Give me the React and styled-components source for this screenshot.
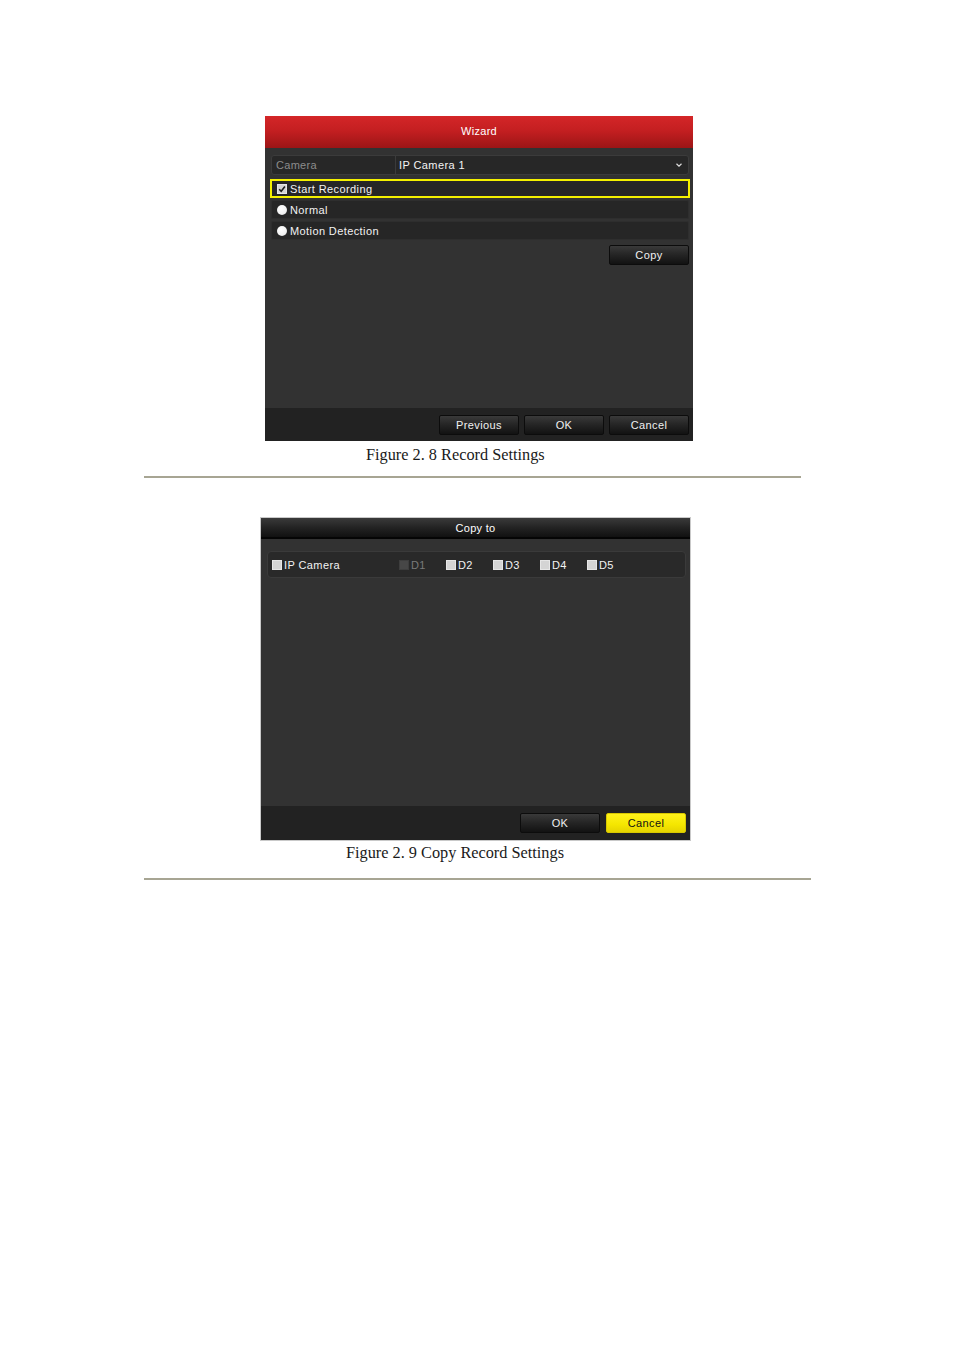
import React from "react";
import styled, { createGlobalStyle } from "styled-components";

const GlobalStyle = createGlobalStyle`
  html, body {
    margin: 0;
    padding: 0;
    background: #ffffff;
  }
  body {
    font-family: "Liberation Sans", Arial, sans-serif;
  }
`;

const Page = styled.div`
  width: 954px;
  min-height: 1348px;
  padding-top: 116px;
  box-sizing: border-box;
  display: flex;
  flex-direction: column;
  align-items: flex-start;
`;

const Dialog = styled.div`
  margin-left: ${({ left }) => left}px;
  margin-top: ${({ top }) => top || 0}px;
  width: ${({ width }) => width}px;
  height: ${({ height }) => height}px;
  background: #323232;
  display: flex;
  flex-direction: column;
  box-sizing: border-box;
  border: ${({ framed }) => (framed ? "1px solid #c9c9c9" : "none")};
  font-size: 11px;
  color: #f2f2f2;
`;

const TitleBar = styled.div`
  height: ${({ tall }) => (tall ? 32 : 21)}px;
  flex-shrink: 0;
  box-sizing: border-box;
  padding-bottom: ${({ tall }) => (tall ? 3 : 0)}px;
  display: flex;
  align-items: center;
  justify-content: center;
  color: #ffffff;
  font-size: 11px;
  letter-spacing: 0.3px;
  background: ${({ red }) =>
    red
      ? "linear-gradient(to bottom, #d42628 0%, #c41f21 45%, #9c1516 100%)"
      : "linear-gradient(to bottom, #3a3a3a 0%, #232323 50%, #111111 100%)"};
  border-bottom: ${({ red }) => (red ? "none" : "2px solid #050505")};
`;

const Body = styled.div`
  flex: 1;
  display: flex;
  flex-direction: column;
  padding: ${({ pad }) => pad};
  gap: 2px;
`;

const FieldRow = styled.div`
  height: 20px;
  box-sizing: border-box;
  display: flex;
  align-items: center;
  background: #272727;
  border: 1px solid #3b3b3b;
  border-radius: 3px;
  margin: 0 4px 0 6px;
`;

const FieldLabel = styled.div`
  width: 124px;
  height: 100%;
  display: flex;
  align-items: center;
  padding-left: 4px;
  box-sizing: border-box;
  color: #8c8c8c;
  letter-spacing: 0.3px;
  border-right: 1px solid #3b3b3b;
`;

const FieldValue = styled.div`
  flex: 1;
  display: flex;
  align-items: center;
  justify-content: space-between;
  padding: 0 6px 0 3px;
  color: #f4f4f4;
  letter-spacing: 0.4px;
`;

const OptionRow = styled.div`
  height: 19px;
  box-sizing: border-box;
  display: flex;
  align-items: center;
  gap: 3px;
  padding-left: 5px;
  background: #262626;
  border: ${({ active }) => (active ? "2px solid #f4f000" : "1px solid #2e2e2e")};
  border-radius: ${({ active }) => (active ? 0 : 2)}px;
  margin: ${({ active }) => (active ? "2px 3px 0 5px" : "0 4px 0 6px")};
  color: #f2f2f2;
  letter-spacing: 0.4px;
`;

const Radio = styled.span`
  width: 10px;
  height: 10px;
  border-radius: 50%;
  background: radial-gradient(circle at 40% 35%, #ffffff 0%, #f2f2f2 60%, #cfcfcf 100%);
  display: inline-block;
  flex-shrink: 0;
`;

const Box = styled.span`
  width: 10px;
  height: 10px;
  flex-shrink: 0;
  display: inline-flex;
  align-items: center;
  justify-content: center;
  background: ${({ disabled }) => (disabled ? "#474747" : "#d4d4d4")};
  border: 1px solid ${({ disabled }) => (disabled ? "#3e3e3e" : "#e6e6e6")};
  box-sizing: border-box;
`;

const ActionLine = styled.div`
  display: flex;
  justify-content: flex-end;
  margin-top: 3px;
  padding-right: 4px;
`;

const Button = styled.div`
  width: 80px;
  height: 20px;
  box-sizing: border-box;
  display: flex;
  align-items: center;
  justify-content: center;
  font-size: 11px;
  letter-spacing: 0.4px;
  color: ${({ primary }) => (primary ? "#111111" : "#f0f0f0")};
  background: ${({ primary }) =>
    primary
      ? "linear-gradient(to bottom, #fff21a 0%, #f4e600 60%, #e6d400 100%)"
      : "linear-gradient(to bottom, #3a3a3a 0%, #262626 45%, #121212 100%)"};
  border: 1px solid ${({ primary }) => (primary ? "#d8c800" : "#0c0c0c")};
  border-radius: 2px;
`;

const Footer = styled.div`
  height: ${({ h }) => h}px;
  flex-shrink: 0;
  background: #222222;
  display: flex;
  justify-content: flex-end;
  align-items: flex-start;
  gap: ${({ gap }) => gap}px;
  padding: ${({ pad }) => pad};
  box-sizing: border-box;
`;

const Panel = styled.div`
  height: 27px;
  box-sizing: border-box;
  margin-top: 12px;
  display: flex;
  align-items: center;
  padding-left: 4px;
  background: #292929;
  border: 1px solid #3a3a3a;
  border-radius: 4px;
`;

const Check = styled.label`
  display: flex;
  align-items: center;
  gap: 2px;
  width: ${({ w }) => w}px;
  color: ${({ disabled }) => (disabled ? "#7a7a7a" : "#f2f2f2")};
  letter-spacing: 0.4px;
`;

const Caption = styled.div`
  margin-left: ${({ left }) => left}px;
  margin-top: ${({ top }) => top}px;
  font-family: "Liberation Serif", "Times New Roman", serif;
  font-size: 16.3px;
  line-height: 18px;
  color: #1a1a1a;
`;

const Rule = styled.div`
  margin-left: 144px;
  margin-top: ${({ top }) => top}px;
  width: ${({ width }) => width}px;
  height: 2px;
  background: #a7a593;
`;

const CheckMark = () => (
  <svg width="8" height="8" viewBox="0 0 8 8">
    <path d="M1.2 4.2 L3.2 6.2 L6.9 1.6" fill="none" stroke="#1c1c1c" strokeWidth="1.6" />
  </svg>
);

const Chevron = () => (
  <svg width="6" height="4" viewBox="0 0 6 4">
    <path d="M0.5 0.8 L3 3.2 L5.5 0.8" fill="none" stroke="#dcdcdc" strokeWidth="1.2" />
  </svg>
);

const channels = [
  { name: "D1", disabled: true },
  { name: "D2" },
  { name: "D3" },
  { name: "D4" },
  { name: "D5" },
];

export default function App() {
  return (
    <>
      <GlobalStyle />
      <Page>
        <Dialog left={265} width={428} height={325}>
          <TitleBar red tall>Wizard</TitleBar>
          <Body pad="7px 0 0 0">
            <FieldRow>
              <FieldLabel>Camera</FieldLabel>
              <FieldValue>
                <span>IP Camera 1</span>
                <Chevron />
              </FieldValue>
            </FieldRow>
            <OptionRow active>
              <Box>
                <CheckMark />
              </Box>
              Start Recording
            </OptionRow>
            <OptionRow>
              <Radio />
              Normal
            </OptionRow>
            <OptionRow>
              <Radio />
              Motion Detection
            </OptionRow>
            <ActionLine>
              <Button>Copy</Button>
            </ActionLine>
          </Body>
          <Footer h={33} gap={5} pad="7px 4px 0 0">
            <Button>Previous</Button>
            <Button>OK</Button>
            <Button>Cancel</Button>
          </Footer>
        </Dialog>
        <Caption left={366} top={5}>Figure 2. 8 Record Settings</Caption>
        <Rule top={12} width={657} />

        <Dialog framed left={260} top={39} width={431} height={324}>
          <TitleBar>Copy to</TitleBar>
          <Body pad="0 4px 0 6px">
            <Panel>
              <Check w={127}>
                <Box />
                IP Camera
              </Check>
              {channels.map((c) => (
                <Check key={c.name} w={47} disabled={c.disabled}>
                  <Box disabled={c.disabled} />
                  {c.name}
                </Check>
              ))}
            </Panel>
          </Body>
          <Footer h={34} gap={6} pad="7px 4px 0 0">
            <Button>OK</Button>
            <Button primary>Cancel</Button>
          </Footer>
        </Dialog>
        <Caption left={346} top={3}>Figure 2. 9 Copy Record Settings</Caption>
        <Rule top={16} width={667} />
      </Page>
    </>
  );
}
